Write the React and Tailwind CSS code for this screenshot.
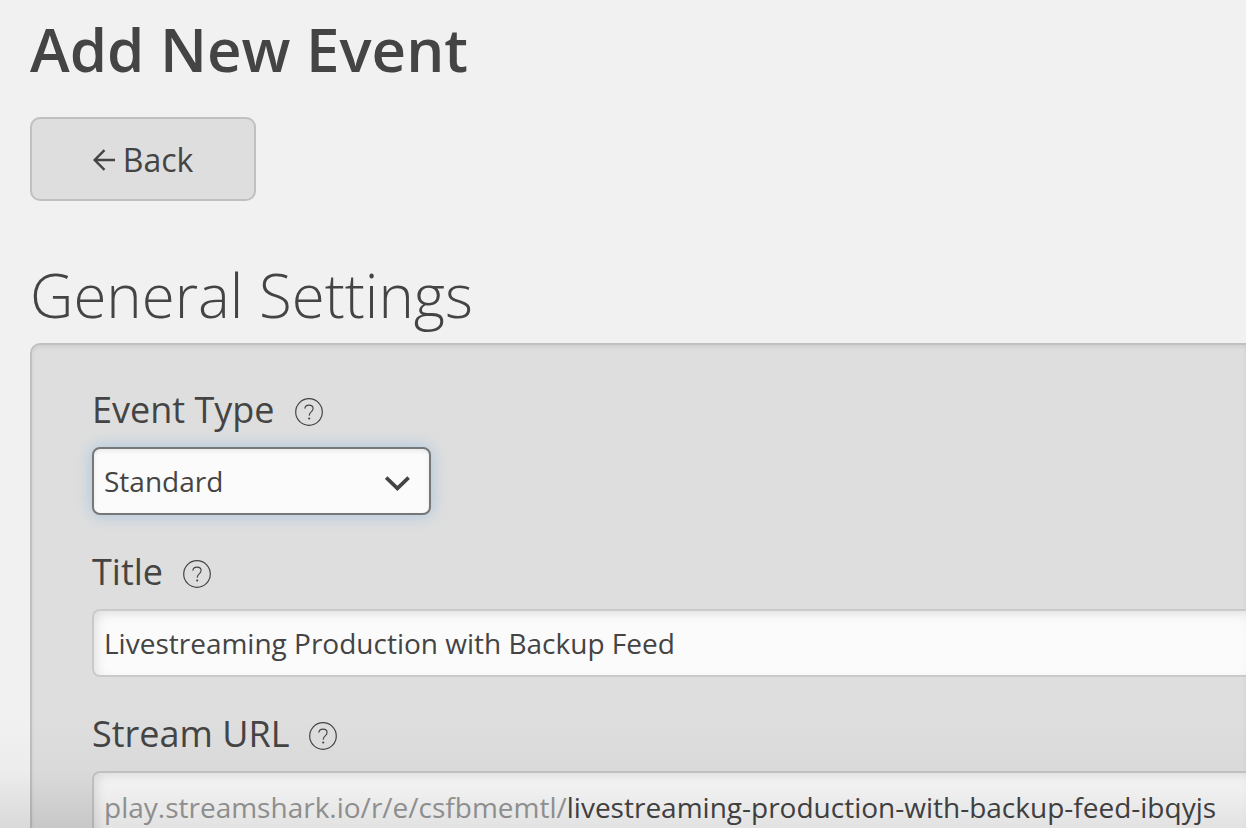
import React, { useState } from 'react';

function HelpIcon({ label }) {
  return (
    <button type="button" aria-label={label} className="mt-1 text-[#444444]">
      <svg width="28" height="28" viewBox="0 0 28 28" fill="none" stroke="currentColor">
        <circle cx="14" cy="14" r="13.3" strokeWidth="1.2" />
        <path d="M9.8 10.6C10 8.5 11.6 7.1 14 7.1C16.5 7.1 18.1 8.6 18.1 10.6C18.1 12.2 17.2 13.1 16 14.1C14.8 15.1 14.2 15.8 14.2 17.7" strokeWidth="1.1" />
        <circle cx="14.2" cy="20.5" r="1.1" fill="currentColor" stroke="none" />
      </svg>
    </button>
  );
}

function Field({ id, label, children }) {
  return (
    <div>
      <div className="mb-3 flex items-center gap-5">
        <label htmlFor={id} className="text-[36px] leading-[50px]">{label}</label>
        <HelpIcon label={`Help: ${label}`} />
      </div>
      {children}
    </div>
  );
}

export default function App() {
  const [type, setType] = useState('Standard');
  const [title, setTitle] = useState('Livestreaming Production with Backup Feed');
  const [slug, setSlug] = useState('livestreaming-production-with-backup-feed-ibqyjs');

  return (
    <div className="relative h-screen overflow-hidden bg-[#f1f1f1] pl-[30px] pt-[19px] font-['Open_Sans',sans-serif] text-[#444444]">
      {/* HEADER */}
      <h1 className="text-[60px] font-semibold leading-[60px]">Add New Event</h1>
      <button type="button" className="mt-[38px] flex h-[84px] w-[226px] items-center justify-center gap-2 rounded-[10px] border-2 border-[#c0c0c0] bg-[#dedede] pt-0.5 text-[32px]">
        <svg width="22" height="22" viewBox="0 0 22 22" fill="none" stroke="currentColor" strokeWidth="2.4">
          <path d="M22 11H2M11.5 1.2L1.7 11L11.5 20.8" />
        </svg>
        Back
      </button>

      {/* GENERAL SETTINGS */}
      <h2 className="mt-16 text-[60px] font-light leading-[60px]">General Settings</h2>
      <form className="mt-[18px] flex flex-col gap-8 rounded-tl-[10px] border-l-2 border-t-2 border-[#c0c0c0] bg-[#dedede] pb-10 pl-[60px] pt-10 shadow-[inset_0_2px_4px_rgba(0,0,0,0.07)]">
        <Field id="event-type" label="Event Type">
          <div className="relative w-[339px]">
            <select
              id="event-type"
              value={type}
              onChange={(e) => setType(e.target.value)}
              className="h-[68px] w-full appearance-none rounded-lg border-2 border-[#777777] bg-[#fbfbfb] px-2.5 text-[28px] shadow-[inset_0_2px_4px_rgba(0,0,0,0.08),0_0_16px_rgba(125,180,225,0.6)] outline-none"
            >
              <option>Standard</option>
            </select>
            <svg className="pointer-events-none absolute right-5 top-7" width="26" height="16" viewBox="0 0 26 16" fill="none" stroke="currentColor" strokeWidth="3.6">
              <path d="M1.2 2.6L12.4 13.4L23.6 2.6" />
            </svg>
          </div>
        </Field>

        <Field id="title" label="Title">
          <input
            id="title"
            type="text"
            value={title}
            onChange={(e) => setTitle(e.target.value)}
            className="block h-[68px] w-full rounded-l-lg border-2 border-r-0 border-[#cacaca] bg-[#fbfbfb] px-2.5 text-[28px] shadow-[inset_4px_4px_12px_-2px_rgba(0,0,0,0.12)] outline-none"
          />
        </Field>

        <Field id="stream-url" label="Stream URL">
          <div className="flex h-[72px] items-center rounded-l-lg border-2 border-r-0 border-[#c4c4c4] bg-[#fbfbfb] pl-2.5 text-[28px] shadow-[inset_4px_4px_12px_-2px_rgba(0,0,0,0.12)]">
            <span className="text-[#999999]">play.streamshark.io/r/e/csfbmemtl/</span>
            <input
              id="stream-url"
              type="text"
              value={slug}
              onChange={(e) => setSlug(e.target.value)}
              className="min-w-0 flex-1 bg-transparent outline-none"
            />
          </div>
        </Field>
      </form>

      {/* shade along the bottom edge */}
      <div className="pointer-events-none absolute inset-x-0 bottom-0 h-28 bg-linear-to-t from-black/10 via-black/2 to-transparent" />
    </div>
  );
}
